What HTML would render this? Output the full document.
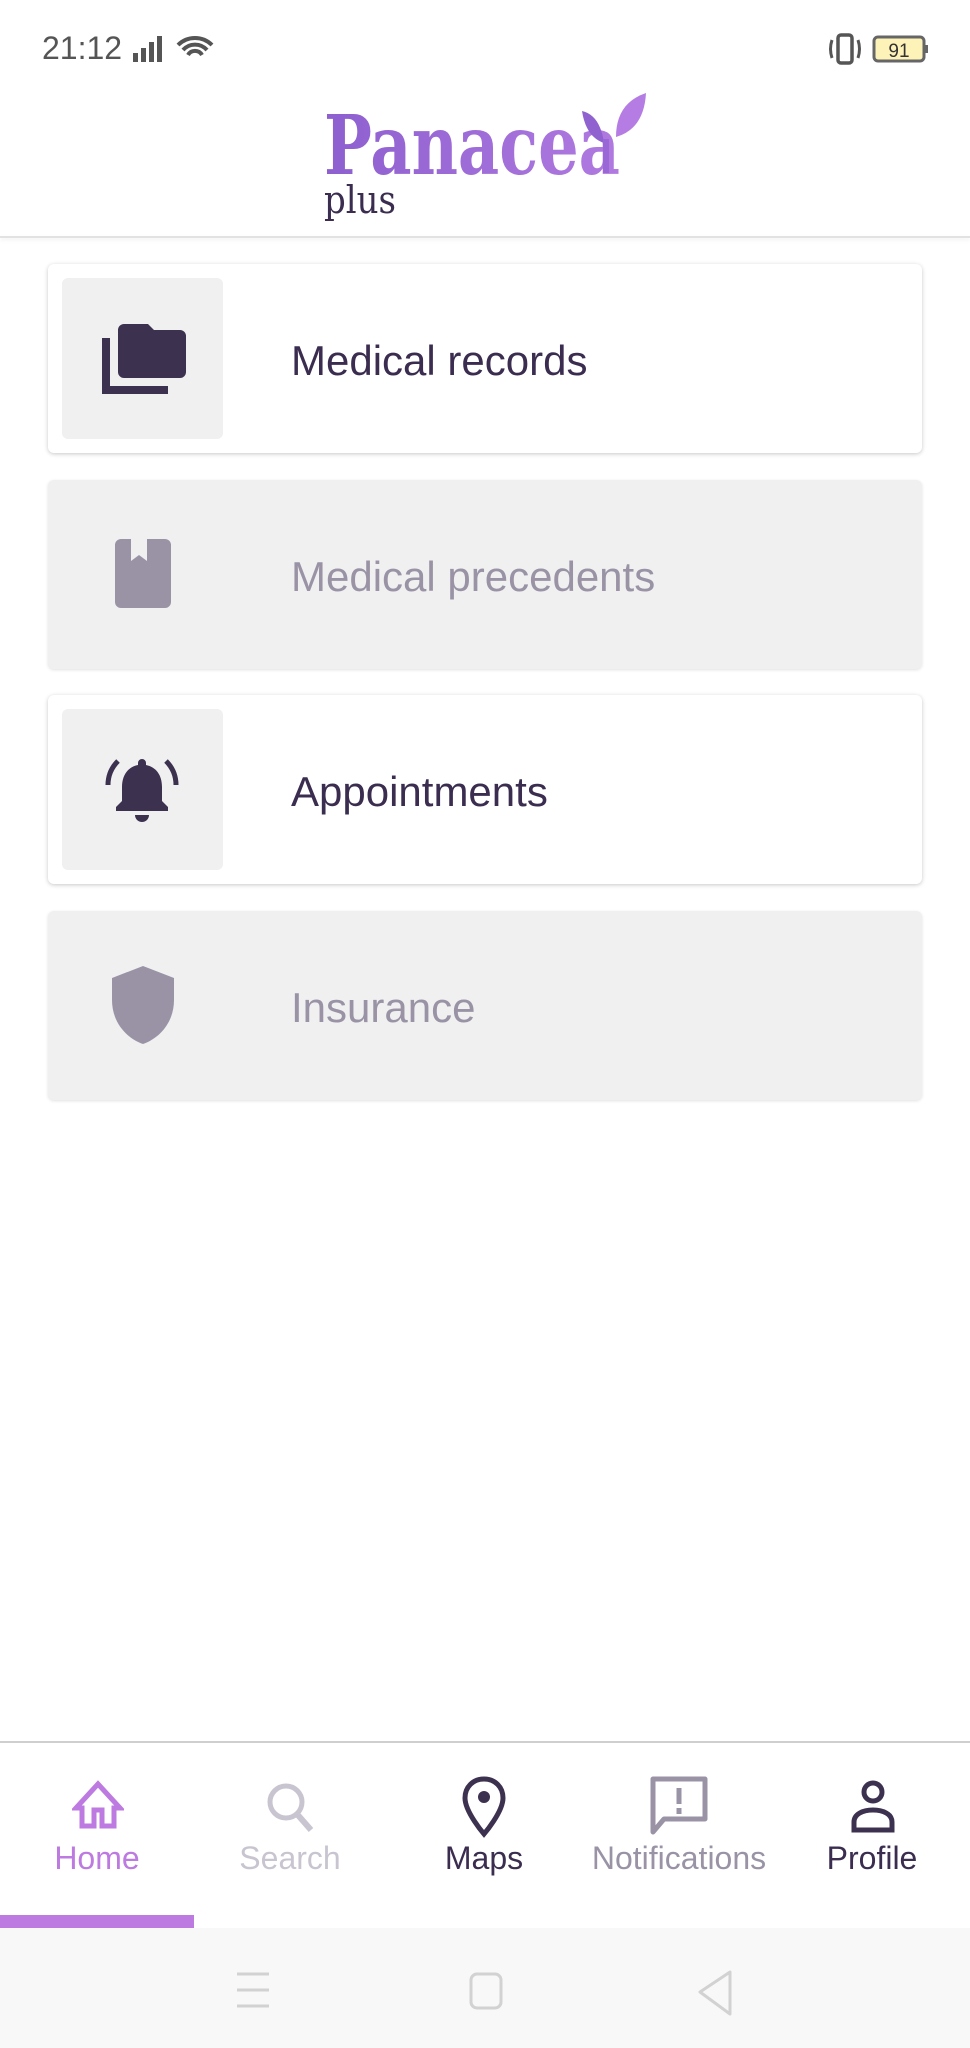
<!DOCTYPE html>
<html><head><meta charset="utf-8"><style>
*{margin:0;padding:0;box-sizing:border-box}
body{width:970px;height:2048px;background:#fff;position:relative;overflow:hidden;font-family:"Liberation Sans",sans-serif}
.abs{position:absolute}
.card{position:absolute;left:48px;width:874px;height:189px;border-radius:6px;box-shadow:0 1px 4px rgba(0,0,0,.22)}
.card.on{background:#fff}
.card.off{background:#f0f0f0;box-shadow:0 1px 3px rgba(0,0,0,.12)}
.ibox{position:absolute;left:14px;top:14px;width:161px;height:161px;background:#f0f0f0;border-radius:6px}
.lbl{position:absolute;left:243px;top:2px;height:189px;line-height:189px;font-size:42px}
.on .lbl{color:#3b2d50}.off .lbl{color:#9a93a6}
.nav{position:absolute;top:1840px;font-size:32px;text-align:center;width:194px}
</style></head><body>
<div class="abs" style="left:42px;top:30px;font-size:32px;color:#555">21:12</div>
<svg class="abs" style="left:132px;top:35px" width="92" height="30" viewBox="0 0 92 30">
<rect x="1" y="18" width="5" height="9" fill="#555"/><rect x="9" y="13" width="5" height="14" fill="#555"/><rect x="17" y="7" width="5" height="20" fill="#555"/><rect x="25" y="1" width="5" height="26" fill="#555"/>
<path d="M46 10a24 24 0 0 1 34 0M51 15a16 16 0 0 1 24 0M56 20a8 8 0 0 1 14 0" stroke="#555" stroke-width="4" fill="none"/>
</svg>
<svg class="abs" style="left:826px;top:32px" width="105" height="34" viewBox="0 0 105 34">
<rect x="12" y="3" width="14" height="28" rx="3" stroke="#555" stroke-width="3.5" fill="none"/>
<path d="M6 8q-3 9 0 18M32 8q3 9 0 18" stroke="#555" stroke-width="3" fill="none"/>
<rect x="48" y="5" width="50" height="24" rx="4" stroke="#666" stroke-width="3" fill="#fdf3b8"/>
<rect x="99" y="13" width="3" height="8" fill="#666"/>
<text x="73" y="25" font-size="19" font-family="Liberation Sans" text-anchor="middle" fill="#333">91</text>
</svg>
<svg class="abs" style="left:310px;top:85px" width="360" height="140" viewBox="0 0 360 140">
<defs><linearGradient id="g" x1="0" x2="1"><stop offset="0" stop-color="#8d5fcf"/><stop offset="1" stop-color="#b07ae0"/></linearGradient></defs>
<text x="14" y="89" font-family="DejaVu Serif" font-weight="bold" font-size="82" textLength="296" lengthAdjust="spacingAndGlyphs" fill="url(#g)">Panacea</text>
<path d="M272 26q18 4 22 32 -18-6-22-32z" fill="#8f62cf"/>
<path d="M336 8q-2 36-30 44 0-34 30-44z" fill="#b57de3"/>
<path d="M296 54v34" stroke="#9a68d6" stroke-width="6"/>
<text x="14" y="128" font-family="DejaVu Serif" font-weight="300" font-size="38" textLength="72" lengthAdjust="spacingAndGlyphs" fill="#3b2d50">plus</text>
</svg>
<div class="abs" style="left:0;top:236px;width:970px;height:2px;background:#e2e2e2;box-shadow:0 2px 4px rgba(0,0,0,.08)"></div>

<div class="card on" style="top:264px"><div class="ibox"></div>
<svg class="abs" style="left:54px;top:60px" width="84" height="70" viewBox="0 0 84 70"><path d="M0 14h8v48h58v8H0z" fill="#3d3150"/><path d="M16 6a6 6 0 0 1 6-6h24l6 6h26a6 6 0 0 1 6 6v36a6 6 0 0 1-6 6H22a6 6 0 0 1-6-6z" fill="#3d3150"/></svg>
<div class="lbl">Medical records</div></div>

<div class="card off" style="top:480px">
<svg class="abs" style="left:67px;top:59px" width="56" height="69" viewBox="0 0 56 69"><path d="M6 0h10v22l8-6 8 6V0h18a6 6 0 0 1 6 6v57a6 6 0 0 1-6 6H6a6 6 0 0 1-6-6V6a6 6 0 0 1 6-6z" fill="#9a93a6"/></svg>
<div class="lbl">Medical precedents</div></div>

<div class="card on" style="top:695px"><div class="ibox"></div>
<svg class="abs" style="left:56px;top:60px" width="76" height="70" viewBox="0 0 76 70"><path d="M38 4a4 4 0 0 1 4 4v2c10 2 16 10 16 22v14l6 6v4H12v-4l6-6V32c0-12 6-20 16-22V8a4 4 0 0 1 4-4zM31 60h14a7 7 0 0 1-14 0z" fill="#3d3150"/><path d="M14 6Q4 16 4 30M62 6Q72 16 72 30" stroke="#3d3150" stroke-width="5" fill="none"/></svg>
<div class="lbl">Appointments</div></div>

<div class="card off" style="top:911px">
<svg class="abs" style="left:63px;top:55px" width="64" height="78" viewBox="0 0 64 78"><path d="M32 0L63 12v22c0 22-14 38-31 44C15 72 1 56 1 34V12z" fill="#9a93a6"/></svg>
<div class="lbl">Insurance</div></div>

<div class="abs" style="left:0;top:1741px;width:970px;height:2px;background:#cfcfcf"></div>
<svg class="abs" style="left:72px;top:1780px" width="52" height="50" viewBox="0 0 52 50"><path d="M26 4L4 28h6v18h12V30h8v16h12V28h6z" stroke="#bd7ae0" stroke-width="5" fill="none" stroke-linejoin="miter"/></svg>
<svg class="abs" style="left:264px;top:1780px" width="54" height="56" viewBox="0 0 54 56"><circle cx="22" cy="22" r="16" stroke="#c9c5d0" stroke-width="5" fill="none"/><path d="M33 34l14 16" stroke="#c9c5d0" stroke-width="6"/></svg>
<svg class="abs" style="left:462px;top:1776px" width="44" height="62" viewBox="0 0 44 62"><path d="M22 3C11 3 3 11 3 22c0 14 19 36 19 36s19-22 19-36C41 11 33 3 22 3z" stroke="#3d3150" stroke-width="5" fill="none"/><circle cx="22" cy="21" r="6" fill="#3d3150"/></svg>
<svg class="abs" style="left:650px;top:1776px" width="58" height="62" viewBox="0 0 58 62"><path d="M3 3h52v40H14L3 56z" stroke="#9a93a6" stroke-width="5" fill="none" stroke-linejoin="round"/><path d="M29 12v16M29 32v6" stroke="#9a93a6" stroke-width="5"/></svg>
<svg class="abs" style="left:850px;top:1778px" width="46" height="56" viewBox="0 0 46 56"><circle cx="23" cy="14" r="9" stroke="#3d3150" stroke-width="5" fill="none"/><path d="M4 52V44c0-8 9-12 19-12s19 4 19 12v8z" stroke="#3d3150" stroke-width="5" fill="none"/></svg>
<div class="nav" style="left:0;color:#bd7ae0">Home</div>
<div class="nav" style="left:193px;color:#c9c5d0">Search</div>
<div class="nav" style="left:387px;color:#3b2d50">Maps</div>
<div class="nav" style="left:570px;width:218px;color:#9a93a6">Notifications</div>
<div class="nav" style="left:775px;color:#3b2d50">Profile</div>
<div class="abs" style="left:0;top:1915px;width:194px;height:13px;background:#bd7ae0"></div>
<div class="abs" style="left:0;top:1928px;width:970px;height:120px;background:#f8f8f8"></div>
<svg class="abs" style="left:230px;top:1970px" width="520" height="50" viewBox="0 0 520 50"><path d="M7 4h32M7 20h32M7 36h32" stroke="#d2d2d2" stroke-width="3"/><rect x="241" y="4" width="30" height="34" rx="6" stroke="#d2d2d2" stroke-width="3" fill="none"/><path d="M500 2L470 22l30 22z" stroke="#d2d2d2" stroke-width="3" fill="none" stroke-linejoin="round"/></svg>
</body></html>
